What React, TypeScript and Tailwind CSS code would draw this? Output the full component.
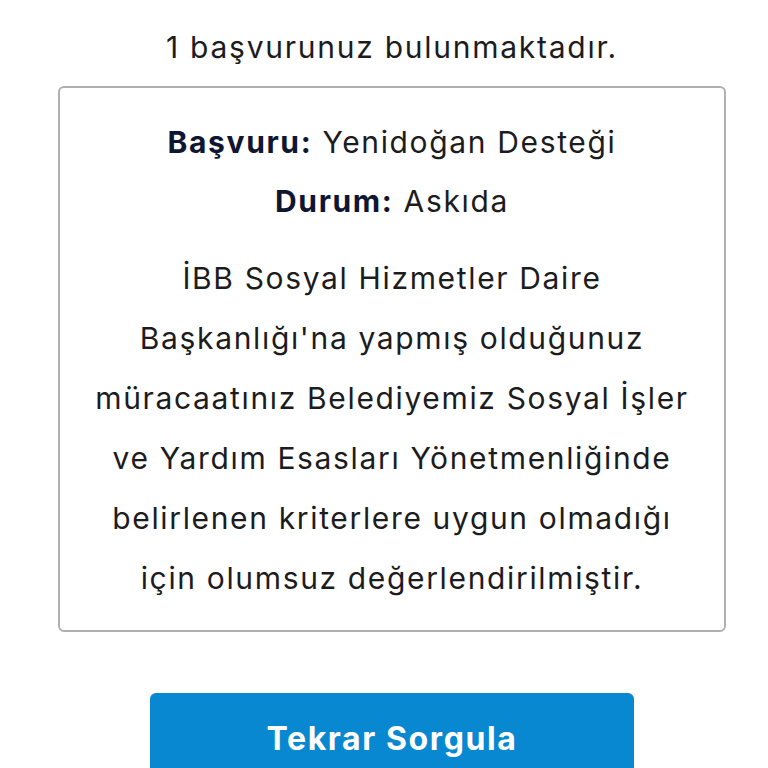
import React from 'react';

const bodyLines = [
  'İBB Sosyal Hizmetler Daire',
  "Başkanlığı'na yapmış olduğunuz",
  'müracaatınız Belediyemiz Sosyal İşler',
  've Yardım Esasları Yönetmenliğinde',
  'belirlenen kriterlere uygun olmadığı',
  'için olumsuz değerlendirilmiştir.',
];

const App = () => {
  return (
    <div className="w-[768px] h-[768px] overflow-hidden bg-white pl-[16px] font-['Inter',sans-serif] text-[#1c1c1e]">
      <p className="pt-[17px] text-center text-[30px] leading-[60px] tracking-[0.058em]">1 başvurunuz bulunmaktadır.</p>

      {/* Result card */}
      <div className="mx-[42px] mt-[9px] rounded-md border-2 border-[#b0b0b0] pt-[25px] pb-[22px] text-center text-[30px] leading-[59px] tracking-[0.055em]">
        <p>
          <span className="font-bold text-[#0f1631]">Başvuru:</span> Yenidoğan Desteği
        </p>
        <p>
          <span className="font-bold text-[#0f1631]">Durum:</span> Askıda
        </p>
        <div className="mt-[17px] leading-[60px]">
          {bodyLines.map((line) => (
            <p key={line}>{line}</p>
          ))}
        </div>
      </div>

      <div className="mx-[134px] mt-[61px]">
        <button className="w-full h-[92px] rounded-md bg-[#0788d0] text-white text-[32px] font-bold tracking-[0.05em]">
          Tekrar Sorgula
        </button>
      </div>
    </div>
  );
};

export default App;
